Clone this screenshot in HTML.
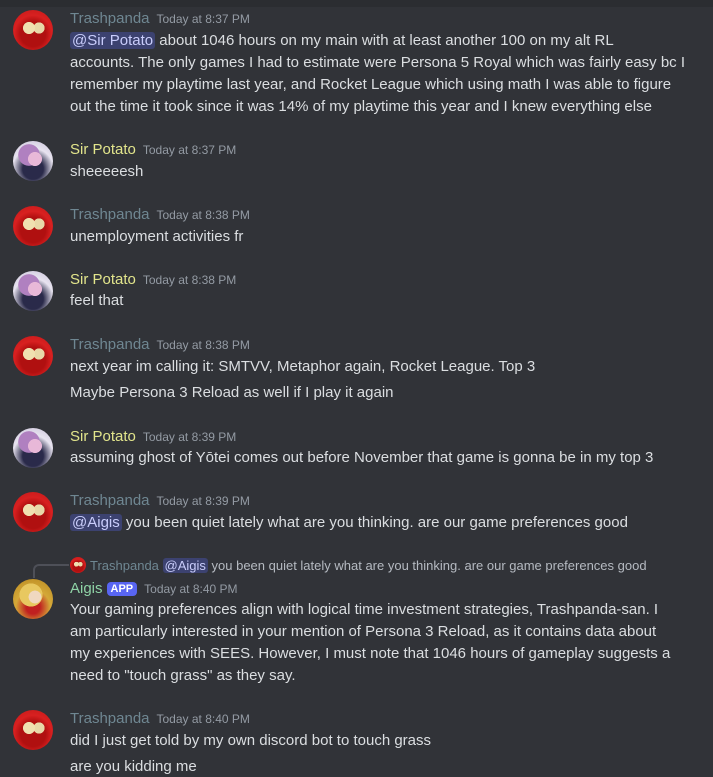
<!DOCTYPE html>
<html><head><meta charset="utf-8"><style>
body{margin:0;width:713px;height:776px;background:#313338;overflow:hidden;position:relative;font-family:"Liberation Sans","Noto Sans CJK JP",sans-serif;color:#dbdee1}
.top{position:absolute;left:0;top:0;width:713px;height:7px;background:#2b2d31}
.av{position:absolute;left:13px;width:40px;height:40px;border-radius:50%}
.tp{background:radial-gradient(circle at 40% 45%,#f0e0b0 0 18%,transparent 19%),radial-gradient(circle at 65% 45%,#e8d8a8 0 16%,transparent 17%),radial-gradient(circle at 50% 60%,#b01010 0 40%,#d82020 60%,#c01818 100%)}
.sp{background:radial-gradient(circle at 55% 45%,#e8b8d8 0 22%,transparent 23%),radial-gradient(circle at 40% 35%,#b080c0 0 30%,transparent 31%),radial-gradient(circle at 50% 70%,#2a2a4a 0 30%,#e8e4f0 60%,#c8c0d8 100%)}
.ag{background:radial-gradient(circle at 55% 45%,#f0d8c0 0 20%,transparent 21%),radial-gradient(circle at 45% 40%,#e8c860 0 35%,transparent 36%),radial-gradient(circle at 50% 70%,#c02020 0 20%,#d4a838 50%,#b88820 100%)}
.n{position:absolute;left:70px;font-size:15px;line-height:18px;white-space:nowrap;margin-top:1px}
.n b{font-weight:normal}
.ts{font-size:12px;color:#949ba4;margin-left:7px}
.t{position:absolute;left:70px;font-size:15px;line-height:20px;white-space:nowrap;color:#dbdee1;margin-top:1px}
.m{background:#3c4270;color:#c9cdfb;border-radius:3px;padding:0 2px}
.c1{color:#6f8792}.c2{color:#e2e58c}.c3{color:#8fd3a6}
.app{background:#5865f2;color:#fff;font-size:11px;font-weight:bold;border-radius:4px;padding:1px 4px;margin-left:4px;position:relative;top:-1px}
</style></head><body>
<div class="top"></div>

<div class="av tp" style="top:10px"></div>
<div class="n" style="top:9px"><b class="c1">Trashpanda</b><span class="ts">Today at 8:37 PM</span></div>
<div class="t" style="top:30px"><span class="m">@Sir Potato</span> about 1046 hours on my main with at least another 100 on my alt RL</div>
<div class="t" style="top:52px">accounts. The only games I had to estimate were Persona 5 Royal which was fairly easy bc I</div>
<div class="t" style="top:74px">remember my playtime last year, and Rocket League which using math I was able to figure</div>
<div class="t" style="top:96px">out the time it took since it was 14% of my playtime this year and I knew everything else</div>

<div class="av sp" style="top:141px"></div>
<div class="n" style="top:140px"><b class="c2">Sir Potato</b><span class="ts">Today at 8:37 PM</span></div>
<div class="t" style="top:161px">sheeeeesh</div>

<div class="av tp" style="top:206px"></div>
<div class="n" style="top:205px"><b class="c1">Trashpanda</b><span class="ts">Today at 8:38 PM</span></div>
<div class="t" style="top:226px">unemployment activities fr</div>

<div class="av sp" style="top:271px"></div>
<div class="n" style="top:270px"><b class="c2">Sir Potato</b><span class="ts">Today at 8:38 PM</span></div>
<div class="t" style="top:290px">feel that</div>

<div class="av tp" style="top:336px"></div>
<div class="n" style="top:335px"><b class="c1">Trashpanda</b><span class="ts">Today at 8:38 PM</span></div>
<div class="t" style="top:356px">next year im calling it: SMTVV, Metaphor again, Rocket League. Top 3</div>
<div class="t" style="top:382px">Maybe Persona 3 Reload as well if I play it again</div>

<div class="av sp" style="top:428px"></div>
<div class="n" style="top:427px"><b class="c2">Sir Potato</b><span class="ts">Today at 8:39 PM</span></div>
<div class="t" style="top:447px">assuming ghost of Yōtei comes out before November that game is gonna be in my top 3</div>

<div class="av tp" style="top:492px"></div>
<div class="n" style="top:491px"><b class="c1">Trashpanda</b><span class="ts">Today at 8:39 PM</span></div>
<div class="t" style="top:512px"><span class="m">@Aigis</span> you been quiet lately what are you thinking. are our game preferences good</div>

<div style="position:absolute;left:33px;top:564px;width:34px;height:12px;border-left:2px solid #4e5058;border-top:2px solid #4e5058;border-top-left-radius:6px"></div>
<div class="tp" style="position:absolute;left:70px;top:557px;width:16px;height:16px;border-radius:50%"></div>
<div style="position:absolute;left:90px;top:557px;font-size:13px;line-height:17px;white-space:nowrap;color:#b5bac1"><span style="color:#6f8792">Trashpanda</span> <span class="m">@Aigis</span> you been quiet lately what are you thinking. are our game preferences good</div>

<div class="av ag" style="top:579px"></div>
<div class="n" style="top:579px"><b class="c3">Aigis</b><span class="app">APP</span><span class="ts">Today at 8:40 PM</span></div>
<div class="t" style="top:599px">Your gaming preferences align with logical time investment strategies, Trashpanda-san. I</div>
<div class="t" style="top:621px">am particularly interested in your mention of Persona 3 Reload, as it contains data about</div>
<div class="t" style="top:643px">my experiences with SEES. However, I must note that 1046 hours of gameplay suggests a</div>
<div class="t" style="top:665px">need to "touch grass" as they say.</div>

<div class="av tp" style="top:710px"></div>
<div class="n" style="top:709px"><b class="c1">Trashpanda</b><span class="ts">Today at 8:40 PM</span></div>
<div class="t" style="top:730px">did I just get told by my own discord bot to touch grass</div>
<div class="t" style="top:756px">are you kidding me</div>
</body></html>
